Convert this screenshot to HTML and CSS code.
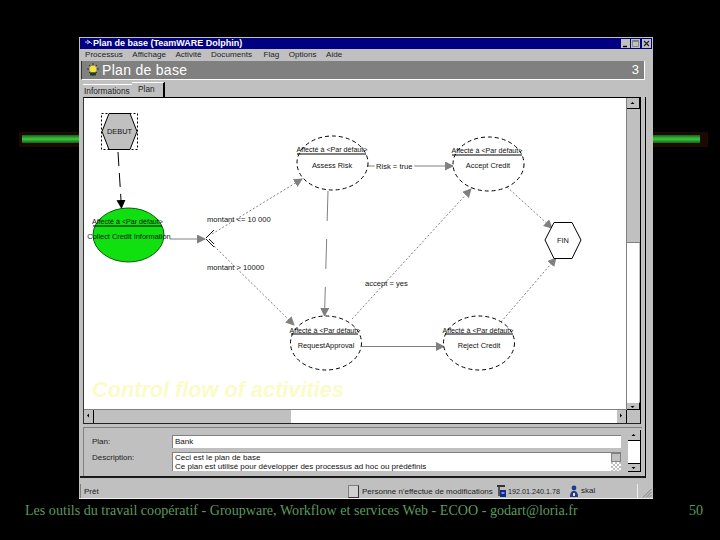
FILE: index.html
```html
<!DOCTYPE html>
<html lang="fr">
<head>
<meta charset="utf-8">
<title>Plan de base</title>
<link rel="stylesheet" href="styles.css">
</head>
<body>
<main class="slide">
  <div class="rule"></div>
  <section class="window">
    <header class="titlebar">
      <svg class="title-icon" width="8" height="8" viewBox="0 0 8 8"><path d="M0 3h5l2 2M2 1l3 2-3 2" fill="none" stroke="#c8c8ff" stroke-width="1"/></svg>
      <span class="title-text">Plan de base (TeamWARE Dolphin)</span>
      <div class="winbtns">
        <span class="winbtn"><svg width="9" height="9" viewBox="0 0 9 9"><path d="M2 7.5h4" stroke="#000" stroke-width="1.4"/></svg></span>
        <span class="winbtn"><svg width="9" height="9" viewBox="0 0 9 9"><path d="M1.5 1.5h6v6h-6z" fill="none" stroke="#888"/><path d="M1.5 2h6" stroke="#777" stroke-width="1.5"/></svg></span>
        <span class="winbtn close"><svg width="9" height="9" viewBox="0 0 9 9"><path d="M2 2l5 5M7 2l-5 5" stroke="#222" stroke-width="1.2"/></svg></span>
      </div>
    </header>
    <nav class="menubar">
      <span>Processus</span><span>Affichage</span><span>Activité</span><span>Documents</span><span class="flag">Flag</span><span>Options</span><span>Aide</span>
    </nav>
    <div class="banner">
      <svg class="banner-icon" width="12" height="13" viewBox="0 0 12 13">
        <path d="M6 0v13M0 6h12M2 2l8 8M10 2l-8 8" stroke="#333" stroke-width="1"/>
        <circle cx="6" cy="6" r="3.6" fill="#f4e43c"/>
        <path d="M3 9.5h6v3H3z" fill="#204020"/>
      </svg>
      <span class="banner-title">Plan de base</span>
      <span class="banner-num">3</span>
    </div>
    <div class="tabs">
      <span class="tab">Informations</span>
      <span class="tab active">Plan</span>
    </div>
    <div class="frame">
      <div class="scene">
        <div class="canvas">
          <svg class="diagram" width="544" height="313" viewBox="84 99 544 313">
            <defs>
              <marker id="ag" markerUnits="userSpaceOnUse" markerWidth="10" markerHeight="10" refX="8" refY="4.5" orient="auto"><path d="M0 0L9 4.5L0 9z" fill="#808080"/></marker>
              <marker id="ab" markerUnits="userSpaceOnUse" markerWidth="10" markerHeight="10" refX="8" refY="4.5" orient="auto"><path d="M0 0L9 4.5L0 9z" fill="#000"/></marker>
            </defs>
            <!-- edges -->
            <path class="edge-black" d="M118 153L121.500 209" marker-end="url(#ab)"/>
            <path class="edge" d="M170 240H205" marker-end="url(#ag)"/>
            <path class="edge-dot" d="M212 235L302 180" marker-end="url(#ag)"/>
            <path class="edge-dot" d="M214 247L294 326" marker-end="url(#ag)"/>
            <path class="split" d="M206 239L214 231M206 240L214 248M209 240L214 245"/>
            <path class="edge-dash" d="M328 192L324.500 317" marker-end="url(#ag)"/>
            <path class="edge" d="M368 167H453" marker-end="url(#ag)"/>
            <path class="edge-dot" d="M352 320L471 190" marker-end="url(#ag)"/>
            <path class="edge-dot" d="M507 188L552 229" marker-end="url(#ag)"/>
            <path class="edge-dot" d="M501 323L556 259" marker-end="url(#ag)"/>
            <path class="edge" d="M362 347.500H444" marker-end="url(#ag)"/>
            <!-- start -->
            <rect class="select" x="101.500" y="114.500" width="36" height="36"/>
            <path class="hex-start" d="M102 132.500L109 114.500H130L137 132.500L130 150.500H109z"/>
            <text class="node-text" x="119.500" y="135">DEBUT</text>
            <!-- nodes -->
            <ellipse class="node-active" cx="128.500" cy="236" rx="35.500" ry="27"/>
            <path class="divider" d="M93 227H162"/>
            <text class="node-role" x="127.500" y="225">Affecté à &lt;Par défaut&gt;</text>
            <text class="node-text" x="129" y="240">Collect Credit Information</text>

            <ellipse class="node" cx="332.500" cy="164" rx="35.500" ry="27"/>
            <path class="divider" d="M297 155H366"/>
            <text class="node-role" x="332" y="153">Affecté à &lt;Par défaut&gt;</text>
            <text class="node-text" x="332" y="169">Assess Risk</text>

            <ellipse class="node" cx="488.500" cy="165" rx="35.500" ry="27"/>
            <path class="divider" d="M452 156H522"/>
            <text class="node-role" x="487" y="154">Affecté à &lt;Par défaut&gt;</text>
            <text class="node-text" x="488" y="169">Accept Credit</text>

            <ellipse class="node" cx="326" cy="344" rx="35.500" ry="27"/>
            <path class="divider" d="M291 335H358"/>
            <text class="node-role" x="325" y="334">Affecté à &lt;Par défaut&gt;</text>
            <text class="node-text" x="326" y="349">RequestApproval</text>

            <ellipse class="node" cx="479" cy="344" rx="35.500" ry="27"/>
            <path class="divider" d="M445 335H513"/>
            <text class="node-role" x="478" y="334">Affecté à &lt;Par défaut&gt;</text>
            <text class="node-text" x="479" y="349">Reject Credit</text>

            <path class="hex-end" d="M545 241L554 223.500H572L581 241L572 259.500H554z"/>
            <text class="node-text" x="563" y="244">FIN</text>
            <!-- labels -->
            <text class="edge-label" x="207" y="223">montant &lt;= 10 000</text>
            <text class="edge-label" x="207" y="271">montant &gt; 10000</text>
            <text class="edge-label bg" x="376" y="170">Risk = true</text>
            <text class="edge-label" x="365" y="287">accept = yes</text>
            <text class="watermark" x="92" y="398">Control flow of activities</text>
          </svg>
        </div>
        <div class="vscroll">
          <span class="sbtn"><svg width="11" height="10" viewBox="0 0 11 10"><path d="M3.500 6h4L5.500 4z" fill="#000"/></svg></span>
          <span class="sthumb"></span>
          <span class="strack"></span>
          <span class="sbtn"><svg width="11" height="8" viewBox="0 0 11 8"><path d="M3.500 3h4L5.500 5z" fill="#000"/></svg></span>
        </div>
        <div class="hscroll">
          <span class="sbtn-h"><svg width="8" height="11" viewBox="0 0 8 11"><path d="M5 3.500v4L3 5.500z" fill="#000"/></svg></span>
          <span class="hthumb"></span>
          <span class="htrack"></span>
          <span class="sbtn-h"><svg width="8" height="11" viewBox="0 0 8 11"><path d="M3 3.500v4L5 5.500z" fill="#000"/></svg></span>
        </div>
        <div class="corner"></div>
      </div>
      <div class="panel">
        <div class="form">
          <div class="row">
            <label class="label">Plan:</label>
            <div class="input">Bank</div>
          </div>
          <div class="row desc">
            <label class="label">Description:</label>
            <div class="textarea">
              <div class="textarea-text">Ceci est le plan de base<br>Ce plan est utilisé pour développer des processus ad hoc ou prédéfinis</div>
              <div class="ta-scroll"><span class="ta-btn"></span><span class="ta-check"></span></div>
            </div>
          </div>
        </div>
        <div class="panel-scroll">
          <span class="pbtn"><svg width="11" height="10" viewBox="0 0 11 10"><path d="M3.500 6h4L5.500 4z" fill="#000"/></svg></span>
          <span class="ptrack"></span>
          <span class="pbtn low"><svg width="11" height="8" viewBox="0 0 11 8"><path d="M3.500 3h4L5.500 5z" fill="#000"/></svg></span>
        </div>
      </div>
    </div>
    <footer class="status">
      <span class="st-ready">Prêt</span>
      <span class="st-box"></span>
      <span class="st-msg">Personne n'effectue de modifications</span>
      <svg class="st-icon" width="9" height="12" viewBox="0 0 9 12"><path d="M0 0h8v2H0z" fill="#333"/><path d="M1 2h2v9H1z" fill="#555"/><path d="M3 5h6v7H3z" fill="#102a90"/><path d="M4.500 7h3v2h-3z" fill="#7a90e0"/></svg>
      <span class="st-ip">192.01.240.1.78</span>
      <svg class="st-icon2" width="8" height="12" viewBox="0 0 8 12"><circle cx="4" cy="3" r="2.400" fill="#223a90"/><path d="M0 12c0-5 2-6 4-6s4 1 4 6z" fill="#223a90"/><path d="M3 8h2v3H3z" fill="#e0e0e0"/></svg>
      <span class="st-user">skal</span>
      <svg class="grip" width="10" height="10" viewBox="0 0 10 10"><path d="M9.500 1L1 9.500M9.500 4L4 9.500M9.500 7L7 9.500" stroke="#808080" stroke-width="1"/></svg>
    </footer>
  </section>
  <footer class="caption">
    <span>Les outils du travail coopératif - Groupware, Workflow et services Web - ECOO - godart@loria.fr</span>
    <span>50</span>
  </footer>
</main>
</body>
</html>
```
FILE: styles.css
```css
* { box-sizing: border-box; }
html, body { margin: 0; padding: 0; background: #000; }
.slide {
  position: relative;
  width: 720px;
  height: 540px;
  padding-top: 37px;
  overflow: hidden;
  background: #000;
}
.rule {
  position: absolute;
  left: 19px;
  top: 132px;
  width: 689px;
  height: 15px;
  padding: 0;
  background: #1c0a02;
}
.rule::after {
  content: "";
  position: absolute;
  left: 3px;
  right: 8px;
  top: 3px;
  height: 8px;
  background: linear-gradient(#14601a, #38c038 45%, #38c038 55%, #14601a);
}
.window {
  position: relative;
  width: 574px;
  height: 462px;
  margin-left: 79px;
  padding-top: 1px;
  background: #c0c0c0;
  border-bottom: 1px solid #eee;
  font-family: "Liberation Sans", Arial, sans-serif;
  font-size: 8px;
  color: #111;
  display: flex;
  flex-direction: column;
}
.titlebar {
  height: 11px;
  margin: 0 1px;
  background: #000080;
  color: #fff;
  display: flex;
  align-items: center;
  padding-left: 5px;
  gap: 0;
}
.title-text { font-weight: 700; font-size: 9px; white-space: nowrap; }
.winbtns { margin-left: auto; display: flex; gap: 1px; padding-right: 1px; }
.winbtn {
  width: 9px;
  height: 9px;
  background: #c0c0c0;
  display: block;
  line-height: 0;
}
.winbtn.close { margin-left: 1px; }
.menubar {
  height: 12px;
  display: flex;
  align-items: center;
  gap: 9.500px;
  padding-left: 6px;
  color: #222;
  white-space: nowrap;
  font-size: 8.100px;
}
.menubar .flag { margin-left: 2px; }
.banner {
  height: 20px;
  margin-left: 2px;
  width: 564px;
  background: #808080;
  border-right: 1px solid #fff;
  border-bottom: 1px solid #fff;
  border-left: 1px solid #333;
  display: flex;
  align-items: center;
  padding: 0 5px 0 5px;
  color: #fff;
}
.banner-title { margin-left: 3px; font-size: 14px; letter-spacing: 0.300px; }
.banner-num { margin-left: auto; font-size: 13px; }
.tabs {
  height: 17px;
  display: flex;
  align-items: flex-end;
  padding-left: 4px;
  color: #222;
  font-size: 8.300px;
}
.tab { height: 13px; width: 49px; border-top: 1px solid #fff; line-height: 13px; padding-left: 1px; white-space: nowrap; overflow: hidden; }
.tab.active {
  width: 33px;
  height: 15px;
  border-right: 2px solid #000;
  padding-left: 6px;
  line-height: 12px;
}
.frame {
  width: 566px;
  margin-left: 1px;
  padding-left: 3px;
  height: 381px;
  border-right: 1px solid #000;
  border-bottom: 2px solid #1a1a1a;
  display: flex;
  flex-direction: column;
  position: relative;
}
.scene {
  width: 558px;
  height: 327px;
  display: grid;
  grid-template-columns: 1fr 13px;
  grid-template-rows: 1fr 13px;
  border-top: 1px solid #000;
  border-left: 1px solid #333;
  border-right: 1px solid #000;
  border-bottom: 1px solid #222;
  background: #fff;
}
.canvas { background: #fff; overflow: hidden; border-right: 1px solid #808080; border-bottom: 1px solid #808080; }
.diagram { display: block; }
.vscroll { display: flex; flex-direction: column; background: #fff; }
.sbtn { height: 11px; background: #c0c0c0; border-bottom: 1px solid #000; border-right: 1px solid #000; display: block; line-height: 0; }
.sbtn:last-child { height: 8px; border-top: 1px solid #fff; }
.sthumb { height: 134px; background: #c0c0c0; border-bottom: 1px solid #808080; }
.strack { flex: 1; background: #fff; border-right: 1px solid #c0c0c0; }
.hscroll { display: flex; background: #fff; }
.sbtn-h { width: 10px; background: #c0c0c0; border-right: 1px solid #000; display: block; line-height: 0; }
.hthumb { width: 197px; background: #c0c0c0; }
.htrack { flex: 1; background: #fff; }
.corner { background: #c0c0c0; }
.edge, .edge-dot, .edge-dash, .edge-black { fill: none; stroke: #808080; stroke-width: 1; }
.edge-dot { stroke-dasharray: 2 2; }
.edge-dash { stroke-dasharray: 30 18; }
.edge-black { stroke: #000; stroke-dasharray: 14 7; }
.split { fill: none; stroke: #111; stroke-width: 1; }
.select { fill: none; stroke: #000; stroke-width: 1; stroke-dasharray: 2 2; }
.hex-start { fill: #c0c0c0; stroke: #000; stroke-width: 1; }
.hex-end { fill: #fff; stroke: #000; stroke-width: 1; }
.node { fill: #fff; stroke: #000; stroke-width: 1; stroke-dasharray: 4 3; }
.node-active { fill: #10e010; stroke: #0a5a0a; stroke-width: 1; }
.divider { stroke: #000; stroke-width: 1; fill: none; }
.node-text, .node-role {
  font-family: "Liberation Sans", Arial, sans-serif;
  font-size: 7.400px;
  text-anchor: middle;
  fill: #111;
}
.node-role { font-size: 7.100px; }
.edge-label {
  font-family: "Liberation Sans", Arial, sans-serif;
  font-size: 7.600px;
  fill: #111;
}
.edge-label.bg { paint-order: stroke; stroke: #fff; stroke-width: 4px; }
.watermark {
  font-family: "Liberation Sans", Arial, sans-serif;
  font-size: 21.700px;
  font-weight: 700;
  font-style: italic;
  fill: #fbfbc8;
}
.panel {
  width: 559px;
  height: 52px;
  margin-top: 3px;
  border-top: 1px solid #808080;
  border-left: 1px solid #808080;
  display: flex;
}
.form { width: 544px; padding-top: 7px; display: flex; flex-direction: column; gap: 4px; }
.row { display: flex; height: 13px; }
.row.desc { height: 19px; }
.label { width: 88px; padding-left: 8px; padding-top: 2px; line-height: 9px; color: #222; }
.desc .label { padding-top: 1px; }
.input {
  width: 449px;
  background: #fff;
  border-top: 1px solid #808080;
  border-left: 1px solid #808080;
  padding-left: 2px;
  line-height: 12px;
}
.textarea {
  width: 449px;
  background: #fff;
  border-top: 1px solid #808080;
  border-left: 1px solid #808080;
  display: flex;
  overflow: hidden;
}
.textarea-text { flex: 1; padding-left: 2px; line-height: 9px; white-space: nowrap; overflow: hidden; }
.ta-scroll { width: 10px; display: flex; flex-direction: column; }
.ta-btn { height: 9px; background: #c0c0c0; border: 1px solid #808080; }
.ta-check { flex: 1; background: repeating-conic-gradient(#fff 0 25%, #c0c0c0 0 50%) 0 0 / 4px 4px; }
.panel-scroll {
  width: 13px;
  margin-top: 2px;
  height: 42px;
  display: flex;
  flex-direction: column;
  border-right: 1px solid #000;
  background: #fff;
}
.pbtn { height: 11px; background: #c0c0c0; border-bottom: 1px solid #000; display: block; line-height: 0; }
.pbtn.low { height: 9px; border-top: 1px solid #000; border-bottom: 1px solid #000; }
.ptrack { flex: 1; }
.status {
  flex: 1;
  margin-top: 6px;
  margin-left: 1px;
  display: flex;
  align-items: center;
  position: relative;
  color: #222;
  font-size: 8px;
  white-space: nowrap;
  border-left: 1px solid #808080;
}
.st-ready { width: 267px; padding-left: 3px; }
.st-box { width: 11px; height: 13px; border: 1px solid #808080; border-right-color: #333; border-bottom-color: #333; background: #d0d0d0; }
.st-msg { width: 138px; padding-left: 3px; }
.st-icon { margin-left: 0; }
.st-ip { width: 64px; padding-left: 2px; font-size: 7.200px; }
.st-icon2 { margin-left: 0; }
.st-user { padding-left: 3px; width: 60px; border-right: 1px solid #eee; height: 14px; line-height: 14px; }
.grip { position: absolute; right: 1px; bottom: 0; }
.caption {
  display: flex;
  justify-content: space-between;
  padding: 3px 17px 0 25px;
  color: #5c9a5c;
  font-family: "Liberation Serif", "Times New Roman", serif;
  font-size: 14.100px;
  line-height: 17px;
  white-space: nowrap;
}
```
